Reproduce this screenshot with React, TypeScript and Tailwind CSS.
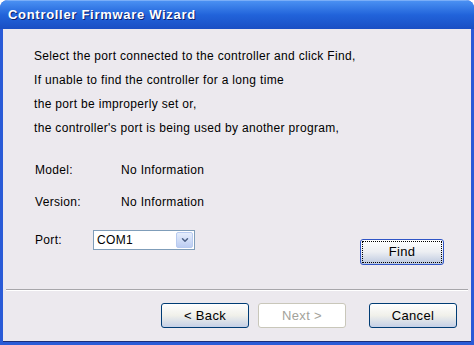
import { ChevronDown } from "lucide-react";

const xpButton =
	"h-[25px] w-[88px] rounded-[3px] border border-[#003C74] bg-gradient-to-b from-[#FFFFFF] via-[#F0F0EA] to-[#C5D0E6] text-[12px] text-black flex items-center justify-center";

export default function App() {
	return (
		<div
			className="w-[474px] h-[345px] flex flex-col bg-[#2A5BD7] rounded-t-[8px] overflow-hidden"
			style={{ fontFamily: '"Liberation Sans", Arial, sans-serif' }}
		>
			{/* Title bar */}
			<div className="h-[29px] shrink-0 flex items-center px-[8px] bg-gradient-to-b from-[#4A90F2] via-[#2163DA] to-[#1A4FC4] border-t border-[#7AAEF8]">
				<span className="text-white font-bold text-[13px] [text-shadow:1px_1px_0_#0A1F6E] tracking-[0.7px]">
					Controller Firmware Wizard
				</span>
			</div>

			{/* Body */}
			<div className="flex-1 flex flex-col mx-[3px] mb-[3px] bg-[#ECE9EE] border-b border-[#1B2E7A] tracking-[0.33px]">
				<div className="pt-[15px] pl-[31px] text-[12px] text-black leading-[24px]">
					<p>Select the port connected to the controller and click Find,</p>
					<p>If unable to find the controller for a long time</p>
					<p>the port be improperly set or,</p>
					<p>the controller's port is being used by another program,</p>
				</div>

				<div className="mt-[18px] pl-[32px] flex items-center h-[24px] text-[12px] text-black">
					<span className="w-[86px]">Model:</span>
					<span>No Information</span>
				</div>
				<div className="mt-[8px] pl-[32px] flex items-center h-[24px] text-[12px] text-black">
					<span className="w-[86px]">Version:</span>
					<span>No Information</span>
				</div>

				<div className="mt-[16px] pl-[32px] pr-[27px] flex items-start justify-between">
					<div className="flex items-center h-[20px] text-[12px] text-black">
						<span className="w-[58px]">Port:</span>
						<div className="w-[102px] h-[20px] border border-[#7F9DB9] bg-white flex items-center">
							<span className="flex-1 pl-[3px]">COM1</span>
							<div className="w-[17px] h-[16px] mr-[1px] rounded-[2px] border border-[#B8CBF0] bg-gradient-to-b from-[#E6EEFC] to-[#BCCDF2] flex items-center justify-center">
								<ChevronDown className="w-[10px] h-[10px] text-[#4D6185]" strokeWidth={3.5} />
							</div>
						</div>
					</div>
					<div className="mt-[9px] h-[26px] w-[84px] rounded-[3px] border border-[#2F55C6] bg-gradient-to-b from-[#FFFFFF] via-[#ECEEF2] to-[#BCC8DF] p-[1px]">
						<div className="h-full w-full border border-dotted border-black flex items-center justify-center text-[13px] text-black">
							Find
						</div>
					</div>
				</div>

				<div className="mt-[24px] mx-[3px] h-[2px] border-t border-[#A7A6AA] border-b border-b-white" />

				<div className="mt-[12px] flex pl-[158px] text-[13px]">
					<div className={xpButton}>
						<span className="text-[13px]">&lt; Back</span>
					</div>
					<div className="ml-[9px] h-[25px] w-[88px] rounded-[3px] border border-[#C9C7BA] bg-white flex items-center justify-center text-[13px] text-[#A3A29A]">
						Next &gt;
					</div>
					<div className={`${xpButton} ml-[23px]`}>
						<span className="text-[13px]">Cancel</span>
					</div>
				</div>
			</div>
		</div>
	);
}
